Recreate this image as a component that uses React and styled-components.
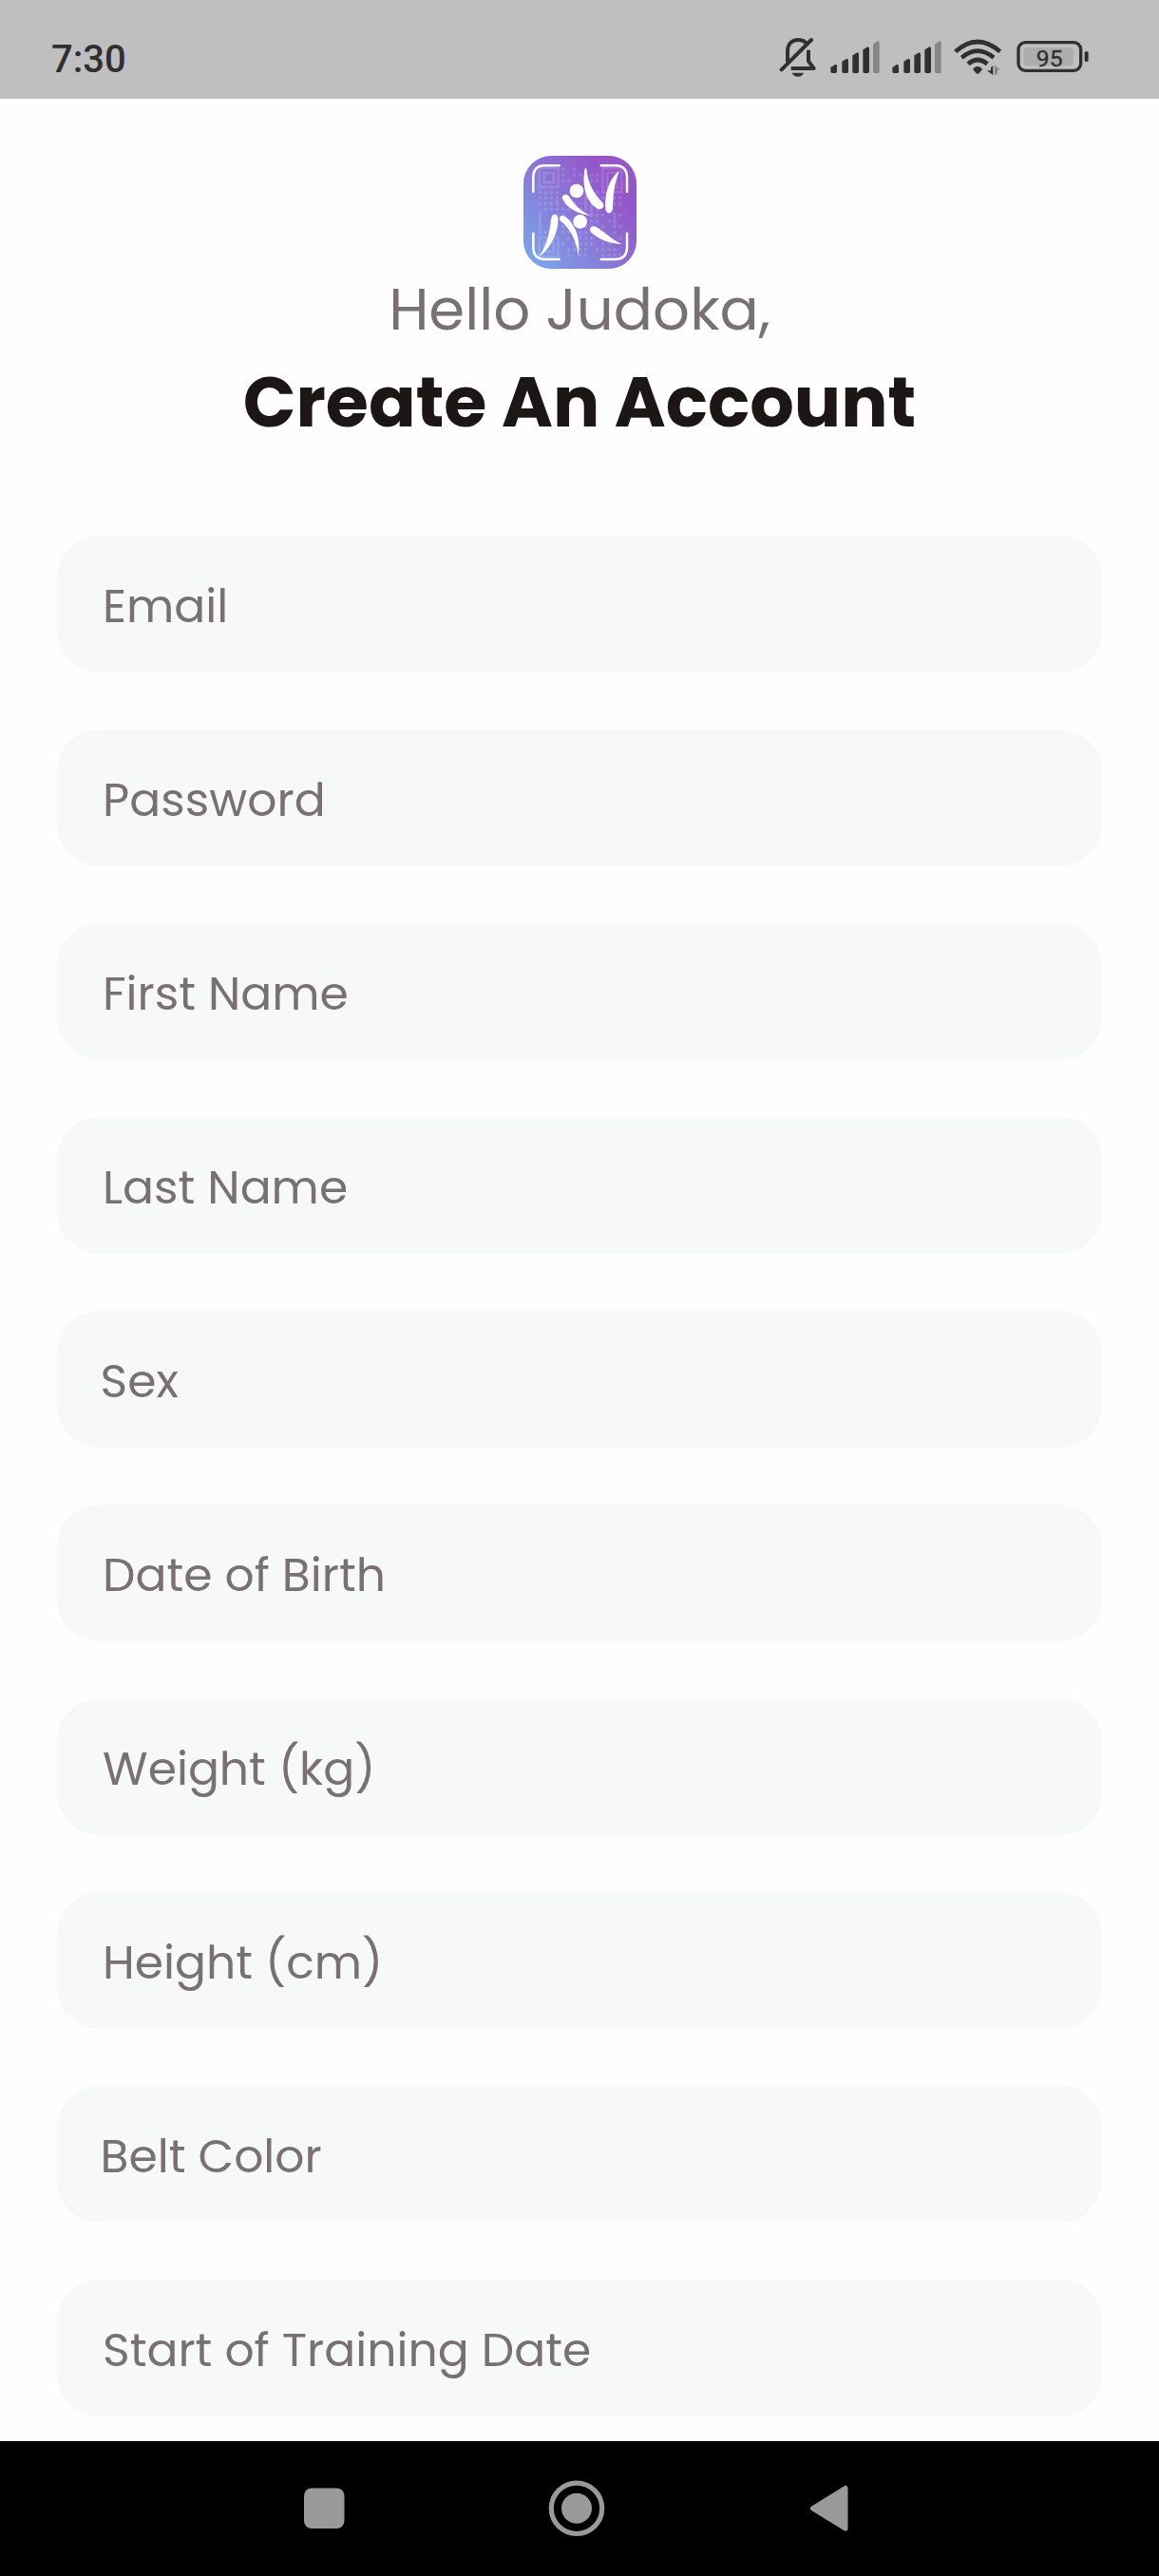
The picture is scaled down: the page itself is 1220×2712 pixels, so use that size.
import React from "react";
import styled, { createGlobalStyle } from "styled-components";

const GlobalStyle = createGlobalStyle`
  *, *::before, *::after { box-sizing: border-box; }
  body {
    margin: 0;
    background: #fefefe;
    font-family: Poppins, Inter, "Open Sans", sans-serif;
    font-feature-settings: "cv11";
  }
`;

const Screen = styled.div`
  width: 1220px;
  height: 2712px;
  display: flex;
  flex-direction: column;
  overflow: hidden;
  background: #fefefe;
`;

const StatusBar = styled.header`
  flex: none;
  height: 104px;
  display: flex;
  align-items: flex-start;
  justify-content: space-between;
  padding: 38px 74px 0 54px;
  background: #bfbfbf;
  color: #303030;
  font-family: Roboto, sans-serif;
`;

const Clock = styled.time`
  padding-top: 1px;
  font-size: 40px;
  font-weight: 500;
  line-height: 48px;
`;

const StatusIcons = styled.div`
  display: flex;
  align-items: flex-start;
`;

const StatusIcon = styled.svg`
  display: block;
  flex: none;
  width: ${(p) => p.$w}px;
  height: 44px;
  margin-left: ${(p) => p.$gap || 0}px;
`;

const Content = styled.main`
  flex: 1;
  min-height: 0;
  display: flex;
  flex-direction: column;
  align-items: center;
  padding: 60px 60px 0;
  overflow: hidden;
`;

const Logo = styled.svg`
  display: block;
  flex: none;
  width: 119px;
  height: 119px;
`;

const Greeting = styled.p`
  flex: none;
  margin: 0;
  color: #787072;
  font-size: 61px;
  line-height: 85px;
  white-space: nowrap;
`;

const Title = styled.h1`
  flex: none;
  margin: 0;
  color: #1d1617;
  font-size: 73.2px;
  font-weight: 700;
  line-height: 111px;
  white-space: nowrap;
`;

const Form = styled.form`
  align-self: stretch;
  display: flex;
  flex-direction: column;
  gap: 60px;
  margin-top: 85px;
`;

const Field = styled.label`
  flex: none;
  height: 144px;
  display: flex;
  align-items: center;
  padding: 4px 48px 0 ${(p) => (p.$select ? 45.5 : 48)}px;
  border-radius: 44px;
  background: #f7f8f8;
`;

const Placeholder = styled.span`
  color: #787072;
  font-size: 48.8px;
  line-height: 60px;
  white-space: nowrap;
`;

const NavBar = styled.nav`
  flex: none;
  height: 142px;
  display: flex;
  align-items: flex-start;
  padding: 41px 0 0 320px;
  background: #000;
`;

const NavIcon = styled.svg`
  display: block;
  flex: none;
  width: ${(p) => p.$w}px;
  height: 60px;
  margin-right: ${(p) => p.$gap || 0}px;
`;

const fields = [
  { label: "Email" },
  { label: "Password" },
  { label: "First Name" },
  { label: "Last Name" },
  { label: "Sex", select: true },
  { label: "Date of Birth" },
  { label: "Weight (kg)" },
  { label: "Height (cm)" },
  { label: "Belt Color", select: true },
  { label: "Start of Training Date" },
];

function MutedBell() {
  return (
    <StatusIcon $w={40} viewBox="60 54 120 132" fill="none" stroke="#303030" strokeWidth="12">
      <path d="M87 136V103C87 80 100 66 120 66C132 66 141 70 147 77" />
      <path d="M68 160L162 66" strokeLinecap="round" />
      <path d="M153 98V133L170 156H98" strokeLinejoin="round" />
      <path d="M101 170H138C134 178 128 182 120 182C111 182 105 178 101 170Z" fill="#303030" stroke="none" />
    </StatusIcon>
  );
}

function Signal({ gap }) {
  const bars = [
    [222, 150, 143],
    [258, 131, 125],
    [291, 112, 106],
    [324, 94, 88],
    [356, 77, 69],
  ];
  return (
    <StatusIcon $w={52} $gap={gap} viewBox="221 54 156 132">
      {bars.map(([x, left, right], i) => (
        <path
          key={x}
          d={`M${x} ${left + 3}L${x + 15} ${right}Q${x + 20} ${right} ${x + 20} ${right + 5}V166Q${x + 20} 171 ${x + 15} 171H${x + 5}Q${x} 171 ${x} 166Z`}
          fill={i === 4 ? "#868686" : "#303030"}
        />
      ))}
    </StatusIcon>
  );
}

function Wifi() {
  return (
    <StatusIcon $w={51} $gap={13} viewBox="612 54 153 132" fill="none" stroke="#303030" strokeWidth="14">
      <path d="M617 103Q687 41 758 103" />
      <path d="M637 122Q687 80 738 122" />
      <path d="M657 142Q687 116 718 142" />
      <path d="M687 150C696 150 702 157 702 160L692 171Q687 176 682 171L673 160C674 155 680 150 687 150Z" fill="#303030" stroke="none" />
      <path d="M736 147V178L717 163H729V153Z" fill="#303030" stroke="none" />
      <path d="M741 178V146L760 161H750V172Z" fill="#868686" stroke="none" />
    </StatusIcon>
  );
}

function Battery() {
  return (
    <StatusIcon $w={76} $gap={15} viewBox="811 54 228 132">
      <rect x="817" y="74" width="197" height="89" rx="22" fill="none" stroke="#303030" strokeWidth="10" />
      <rect x="834" y="90" width="156" height="57" rx="7" fill="#adadad" />
      <rect x="1026" y="102" width="12" height="33" rx="5" fill="#303030" />
      <text
        x="915"
        y="150"
        textAnchor="middle"
        fontFamily="Roboto, sans-serif"
        fontSize="74"
        fill="#303030"
        stroke="#303030"
        strokeWidth="1"
      >
        95
      </text>
    </StatusIcon>
  );
}

const dotRows = [
  [85, "185 221"],
  [103, "185 221 239 275 293"],
  [121, "185 203 257 275 293"],
  [158, "112 130 148 166 293"],
  [175, "112 130 148 185 293 311 330 348 366"],
  [193, "112 130 148 203 221 257 293 348 366"],
  [211, "130 148 166 185 203 239 293 330"],
  [230, "112 166 185 275 293 311 366"],
  [248, "148 166 185 203 275 293 330"],
  [266, "148 166 185 203 257 275 311 366"],
  [284, "112 130 148 185 203 239 257 311 348"],
  [302, "203 239 257 275 330 366"],
  [320, "185 221 239 257 275 311 330"],
  [338, "203 221 239 257 293 311 330 348"],
  [356, "203 239 257 311 330 348 366"],
];

function JudoLogo() {
  return (
    <Logo viewBox="60 42 357 357" role="img" aria-label="Judoka">
      <defs>
        <linearGradient id="tile" x1="0.08" y1="0.92" x2="0.82" y2="0.3">
          <stop offset="0" stopColor="#7aa2ea" />
          <stop offset="0.5" stopColor="#897bd8" />
          <stop offset="1" stopColor="#9456c9" />
        </linearGradient>
      </defs>
      <rect x="60" y="42" width="357" height="357" rx="88" fill="url(#tile)" />
      <g fill="#fff" opacity="0.13">
        {dotRows.map(([y, xs]) =>
          xs.split(" ").map((x) => <circle key={`${x}-${y}`} cx={x} cy={y} r="5.5" />)
        )}
        <rect x="162" y="168" width="9" height="32" rx="4" />
        <rect x="252" y="158" width="9" height="60" rx="4" />
        <rect x="270" y="184" width="9" height="44" rx="4" />
        <rect x="107" y="220" width="9" height="54" rx="4" />
        <rect x="343" y="222" width="9" height="50" rx="4" />
      </g>
      <g fill="none" stroke="#fff" strokeWidth="8" opacity="0.13">
        <rect x="110" y="81" width="60" height="60" />
        <rect x="125" y="96" width="30" height="30" />
        <rect x="310" y="81" width="60" height="76" />
        <rect x="325" y="96" width="30" height="46" />
        <rect x="110" y="300" width="60" height="60" />
        <rect x="125" y="315" width="30" height="30" />
      </g>
      <g fill="none" stroke="#fff" strokeWidth="7.5" strokeLinecap="round">
        <path d="M173 73H128Q91 73 91 111V155" />
        <path d="M305 73H349Q387 73 387 111V155" />
        <path d="M91 287V331Q91 369 128 369H173" />
        <path d="M387 287V331Q387 369 349 369H305" />
      </g>
      <g fill="#fff">
        <circle cx="228" cy="153" r="22" />
        <circle cx="239" cy="250" r="22" />
        <path d="M256 80C260 82 260 87 261 98C267 132 282 161 310 190C320 202 307 217 292 208C263 189 245 150 252 92Q253 81 256 80Z" />
        <path d="M363 90C350 121 344 149 342 208C341 229 319 228 319 208C316 167 326 128 352 99Q358 92 363 90Z" />
        <path d="M185 181C177 166 194 158 203 169C221 196 239 216 273 232C233 225 200 210 185 181Z" />
        <path d="M148 240C151 222 168 224 169 241C170 286 146 334 109 361C132 328 142 291 148 240Z" />
        <path d="M176 247C168 233 183 225 196 237C226 264 240 302 233 358C229 316 211 275 176 247Z" />
        <path d="M274 284C263 272 277 259 292 268C320 287 343 309 371 321C329 319 297 305 274 284Z" />
      </g>
    </Logo>
  );
}

export default function App() {
  return (
    <>
      <GlobalStyle />
      <Screen>
        <StatusBar>
          <Clock>7:30</Clock>
          <StatusIcons>
            <MutedBell />
            <Signal gap={14} />
            <Signal gap={13} />
            <Wifi />
            <Battery />
          </StatusIcons>
        </StatusBar>
        <Content>
          <JudoLogo />
          <Greeting>Hello Judoka,</Greeting>
          <Title>Create An Account</Title>
          <Form>
            {fields.map((f) => (
              <Field key={f.label} $select={f.select}>
                <Placeholder>{f.label}</Placeholder>
              </Field>
            ))}
          </Form>
        </Content>
        <NavBar>
          <NavIcon $w={43} $gap={213} viewBox="0 0 43 60" fill="#999">
            <rect y="8.5" width="42.5" height="42.5" rx="8" />
          </NavIcon>
          <NavIcon $w={62} $gap={214} viewBox="0 0 62 60">
            <circle cx="31" cy="29.8" r="26.7" fill="none" stroke="#999" strokeWidth="5.2" />
            <circle cx="31" cy="29.8" r="16" fill="#999" />
          </NavIcon>
          <NavIcon $w={41} viewBox="0 0 41 60" fill="#999" stroke="#999" strokeWidth="5" strokeLinejoin="round">
            <path d="M3.4 29.8L38 8.5V51.1Z" />
          </NavIcon>
        </NavBar>
      </Screen>
    </>
  );
}
